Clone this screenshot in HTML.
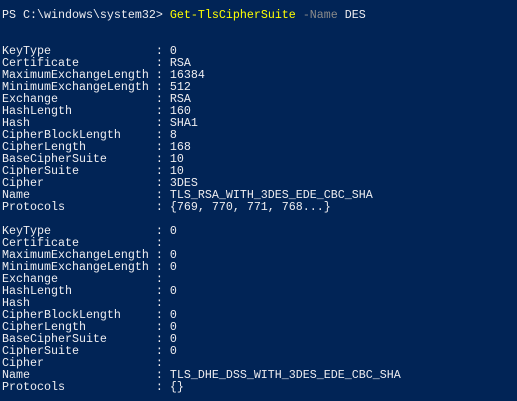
<!DOCTYPE html>
<html><head><style>
html,body{margin:0;padding:0;background:#012456;width:517px;height:401px;overflow:hidden}
pre{margin:0;position:absolute;left:2px;top:9px;font-family:"Liberation Mono",monospace;font-size:11.67px;line-height:12px;color:#eeedf0;letter-spacing:0}
.y{color:#ffff00}.g{color:#8a8a8a}
</style></head><body>
<pre>PS C:\windows\system32&gt; <span class="y">Get-TlsCipherSuite</span> <span class="g">-Name</span> DES


KeyType               : 0
Certificate           : RSA
MaximumExchangeLength : 16384
MinimumExchangeLength : 512
Exchange              : RSA
HashLength            : 160
Hash                  : SHA1
CipherBlockLength     : 8
CipherLength          : 168
BaseCipherSuite       : 10
CipherSuite           : 10
Cipher                : 3DES
Name                  : TLS_RSA_WITH_3DES_EDE_CBC_SHA
Protocols             : {769, 770, 771, 768...}

KeyType               : 0
Certificate           :
MaximumExchangeLength : 0
MinimumExchangeLength : 0
Exchange              :
HashLength            : 0
Hash                  :
CipherBlockLength     : 0
CipherLength          : 0
BaseCipherSuite       : 0
CipherSuite           : 0
Cipher                :
Name                  : TLS_DHE_DSS_WITH_3DES_EDE_CBC_SHA
Protocols             : {}</pre>
</body></html>
